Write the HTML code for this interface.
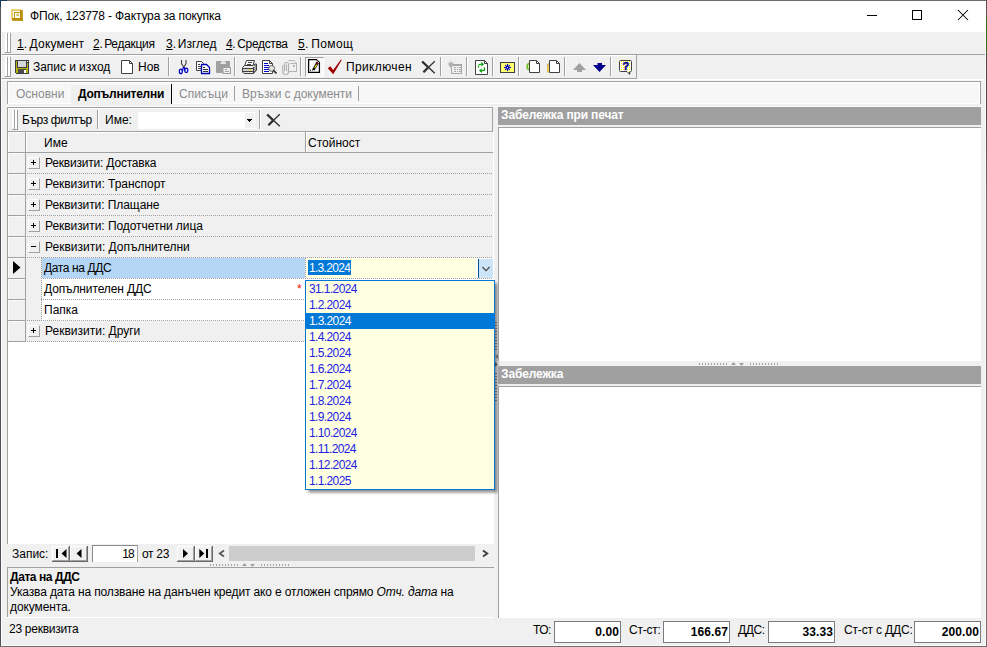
<!DOCTYPE html>
<html>
<head>
<meta charset="utf-8">
<title>ФПок</title>
<style>
html,body{margin:0;padding:0;}
body{width:987px;height:647px;overflow:hidden;background:#f0f0f0;position:relative;
 font-family:"Liberation Sans",sans-serif;font-size:12px;color:#000;}
div,span{position:absolute;box-sizing:border-box;white-space:nowrap;}
.t{height:16px;line-height:16px;}
.b{font-weight:bold;}
.g{color:#8c8c8c;}
.hl{background:#a0a0a0;height:1px;}
.vl{background:#a0a0a0;width:1px;}
.wl{background:#fff;}
.sep{width:2px;height:19px;top:57px;border-left:1px solid #a0a0a0;border-right:1px solid #fff;}
.dot{height:1px;background-image:repeating-linear-gradient(90deg,#a0a0a0 0,#a0a0a0 1px,transparent 1px,transparent 2px);}
.vdot{width:1px;background-image:repeating-linear-gradient(180deg,#a0a0a0 0,#a0a0a0 1px,transparent 1px,transparent 2px);}
.ind{left:8px;width:18px;height:21px;border-right:1px solid #a0a0a0;border-bottom:1px solid #a0a0a0;background:#f0f0f0;box-shadow:inset 1px 1px 0 #fbfbfb;}
.pm{left:28px;width:12px;height:12px;background:#f0f0f0;border-top:1px solid #fff;border-left:1px solid #fff;border-right:1px solid #a0a0a0;border-bottom:1px solid #a0a0a0;}
.pm i{position:absolute;background:#000;}
.li{left:306px;width:188px;height:16px;line-height:16px;padding-left:3px;color:#2222e4;letter-spacing:-0.62px;}
.box{height:22px;top:621px;width:67px;background:#fff;border:1px solid #7a7a7a;}
.num{font-weight:bold;text-align:right;letter-spacing:0.08px;width:65px;}
svg{position:absolute;overflow:visible;}
</style>
</head>
<body>

<!-- ===== title bar ===== -->
<div id="title" style="left:1px;top:1px;width:985px;height:31px;background:#fff;"></div>
<div class="t" style="left:30px;top:8px;letter-spacing:-0.13px;">ФПок, 123778 - Фактура за покупка</div>

<!-- ===== menu bar ===== -->
<div id="menu" style="left:1px;top:32px;width:985px;height:22px;background:#f0f0f0;"></div>
<div class="t" style="left:17px;top:36px;word-spacing:-1.3px;letter-spacing:0.18px;"><u>1</u>. Документ</div>
<div class="t" style="left:93px;top:36px;word-spacing:-1.3px;letter-spacing:-0.3px;"><u>2</u>. Редакция</div>
<div class="t" style="left:166px;top:36px;word-spacing:-1.5px;"><u>3</u>. Изглед</div>
<div class="t" style="left:226px;top:36px;word-spacing:-1px;letter-spacing:-0.35px;"><u>4</u>. Средства</div>
<div class="t" style="left:298px;top:36px;word-spacing:-1.3px;letter-spacing:0.4px;"><u>5</u>. Помощ</div>

<!-- ===== toolbar ===== -->
<div class="hl" style="left:1px;top:54px;width:985px;"></div>
<div class="hl wl" style="left:1px;top:55px;width:636px;"></div>
<div class="hl" style="left:1px;top:78px;width:636px;"></div>
<div class="hl wl" style="left:1px;top:79px;width:985px;"></div>
<div class="hl" style="left:1px;top:80px;width:985px;background:#f7f7f7;"></div>
<div class="hl wl" style="left:7px;top:106px;width:975px;background:#fafafa;"></div>
<div class="vl" style="left:636px;top:55px;height:24px;"></div>
<div class="t" style="left:33px;top:59px;letter-spacing:-0.05px;">Запис и изход</div>
<div class="t" style="left:138px;top:59px;">Нов</div>
<div class="t" style="left:346px;top:59px;letter-spacing:0.36px;">Приключен</div>

<!-- ===== tab strip ===== -->
<div id="tabs" style="left:7px;top:81px;width:974px;height:23px;background:#f7f7f7;border-top:1px solid #a0a0a0;border-left:1px solid #a0a0a0;border-right:1px solid #a0a0a0;box-shadow:inset 1px 1px 0 #fff,inset -1px -1px 0 #fff;"></div>
<div style="left:71px;top:85px;width:100px;height:19px;background:#f0f0f0;"></div>
<div class="t g" style="left:16px;top:86px;">Основни</div>
<div class="t b" style="left:78px;top:86px;letter-spacing:-0.25px;">Допълнителни</div>
<div class="t g" style="left:179px;top:86px;">Списъци</div>
<div class="t g" style="left:242px;top:86px;letter-spacing:-0.06px;">Връзки с документи</div>


<!-- ===== left panel: filter bar ===== -->
<div id="fbar" style="left:7px;top:107px;width:486px;height:25px;border:1px solid #a0a0a0;box-shadow:inset 1px 1px 0 #fbfbfb;"></div>
<div class="t" style="left:22px;top:112px;letter-spacing:-0.38px;">Бърз филтър</div>
<div class="vl" style="left:97px;top:110px;height:19px;"></div>
<div class="vl wl" style="left:98px;top:110px;height:19px;"></div>
<div class="t" style="left:105px;top:112px;">Име:</div>
<div style="left:138px;top:112px;width:117px;height:17px;background:#fff;"></div><div style="left:245px;top:113px;width:9px;height:15px;background:#f0f0f0;"></div>
<div class="vl" style="left:259px;top:110px;height:19px;"></div>
<div class="vl wl" style="left:260px;top:110px;height:19px;"></div>

<!-- ===== grid ===== -->
<div id="gridbg" style="left:7px;top:132px;width:487px;height:412px;background:#fff;border-left:1px solid #a0a0a0;"></div>
<div id="ghead" style="left:8px;top:132px;width:485px;height:21px;background:#f0f0f0;border-bottom:1px solid #a0a0a0;"></div>
<div class="vl" style="left:25px;top:132px;height:20px;"></div>
<div class="vl" style="left:305px;top:132px;height:20px;"></div>
<div class="hl wl" style="left:8px;top:132px;width:17px;"></div><div class="hl wl" style="left:26px;top:132px;width:279px;"></div><div class="hl wl" style="left:306px;top:132px;width:187px;"></div>
<div class="vl wl" style="left:8px;top:132px;height:20px;"></div>
<div class="vl wl" style="left:26px;top:132px;height:20px;"></div>
<div class="vl wl" style="left:306px;top:132px;height:20px;"></div>
<div class="t" style="left:44px;top:135px;">Име</div>
<div class="t" style="left:308px;top:135px;">Стойност</div>

<!-- group rows background -->
<div style="left:26px;top:153px;width:467px;height:105px;background:#f0f0f0;"></div>
<div style="left:26px;top:258px;width:16px;height:63px;background:#f0f0f0;"></div>
<div style="left:26px;top:321px;width:467px;height:21px;background:#f0f0f0;"></div>
<!-- indicator cells -->
<div class="ind" style="top:153px;"></div>
<div class="ind" style="top:174px;"></div>
<div class="ind" style="top:195px;"></div>
<div class="ind" style="top:216px;"></div>
<div class="ind" style="top:237px;"></div>
<div class="ind" style="top:258px;"></div>
<div class="ind" style="top:279px;"></div>
<div class="ind" style="top:300px;"></div>
<div class="ind" style="top:321px;"></div>
<!-- dotted row lines -->
<div class="dot" style="left:27px;top:173px;width:466px;"></div>
<div class="dot" style="left:27px;top:194px;width:466px;"></div>
<div class="dot" style="left:27px;top:215px;width:466px;"></div>
<div class="dot" style="left:27px;top:236px;width:466px;"></div>
<div class="dot" style="left:27px;top:257px;width:466px;"></div>
<div class="dot" style="left:41px;top:278px;width:452px;"></div>
<div class="dot" style="left:41px;top:299px;width:452px;"></div>
<div class="dot" style="left:27px;top:320px;width:466px;"></div>
<div class="dot" style="left:27px;top:341px;width:466px;"></div>
<div class="vdot" style="left:41px;top:258px;height:63px;"></div>
<div class="vdot" style="left:305px;top:258px;height:63px;"></div>
<!-- expand buttons -->
<div class="pm" style="top:157px;"><i style="left:2px;top:4px;width:5px;height:1px;"></i><i style="left:4px;top:2px;width:1px;height:5px;"></i></div>
<div class="pm" style="top:178px;"><i style="left:2px;top:4px;width:5px;height:1px;"></i><i style="left:4px;top:2px;width:1px;height:5px;"></i></div>
<div class="pm" style="top:199px;"><i style="left:2px;top:4px;width:5px;height:1px;"></i><i style="left:4px;top:2px;width:1px;height:5px;"></i></div>
<div class="pm" style="top:220px;"><i style="left:2px;top:4px;width:5px;height:1px;"></i><i style="left:4px;top:2px;width:1px;height:5px;"></i></div>
<div class="pm" style="top:241px;"><i style="left:2px;top:4px;width:5px;height:1px;"></i></div>
<div class="pm" style="top:325px;"><i style="left:2px;top:4px;width:5px;height:1px;"></i><i style="left:4px;top:2px;width:1px;height:5px;"></i></div>
<!-- row texts -->
<div class="t" style="left:45px;top:155px;letter-spacing:-0.2px;">Реквизити: Доставка</div>
<div class="t" style="left:45px;top:176px;letter-spacing:-0.04px;">Реквизити: Транспорт</div>
<div class="t" style="left:45px;top:197px;letter-spacing:-0.07px;">Реквизити: Плащане</div>
<div class="t" style="left:45px;top:218px;letter-spacing:-0.06px;">Реквизити: Подотчетни лица</div>
<div class="t" style="left:45px;top:239px;">Реквизити: Допълнителни</div>
<div style="left:42px;top:258px;width:263px;height:20px;background:#b4d5f3;"></div>
<div class="t" style="left:44px;top:260px;letter-spacing:-0.37px;">Дата на ДДС</div>
<div class="t" style="left:44px;top:281px;letter-spacing:-0.12px;">Допълнителен ДДС</div>
<div class="t" style="left:44px;top:302px;">Папка</div>
<div class="t" style="left:45px;top:323px;">Реквизити: Други</div>
<!-- current row arrow -->
<svg style="left:13px;top:261px;" width="8" height="13"><path d="M0 0L7.5 6.5L0 13Z" fill="#000"/></svg>
<!-- editor cell -->
<div style="left:306px;top:258px;width:187px;height:20px;background:#fff;"></div><div style="left:306px;top:258px;width:170px;height:20px;background:#ffffe1;"></div>
<div style="left:308px;top:260px;width:43px;height:15px;background:#0078d7;"></div>
<div class="t" style="left:309px;top:260px;color:#fff;letter-spacing:-0.7px;">1.3.2024</div>
<div style="left:478px;top:259px;width:15px;height:19px;background:#cce4f7;border-left:1px solid #005499;"></div>
<svg style="left:482px;top:266px;" width="8" height="6"><path d="M0.4 1L4 4.6L7.6 1" fill="none" stroke="#444" stroke-width="1.1"/></svg>
<div class="t" style="left:297px;top:281px;color:#f01000;">*</div>

<!-- vertical splitter marks -->
<div style="left:495px;top:322px;width:2px;height:28px;background-image:repeating-linear-gradient(180deg,#909090 0,#909090 1px,transparent 1px,transparent 3px);"></div>
<div style="left:495px;top:373px;width:2px;height:28px;background-image:repeating-linear-gradient(180deg,#909090 0,#909090 1px,transparent 1px,transparent 3px);"></div>
<svg style="left:495px;top:354px;" width="3" height="5"><path d="M3 0V5L0 2.5Z" fill="#909090"/></svg>
<svg style="left:495px;top:362px;" width="3" height="5"><path d="M0 0V5L3 2.5Z" fill="#808080"/></svg>
<!-- dropdown list -->

<div id="ddl" style="left:305px;top:280px;width:190px;height:210px;background:#ffffe1;border:1px solid #0078d7;box-shadow:2.5px 2.5px 3px rgba(0,0,0,0.46);"></div>
<div class="li" style="top:281px;">31.1.2024</div>
<div class="li" style="top:297px;">1.2.2024</div>
<div class="li" style="top:313px;background:#0078d7;color:#fff;">1.3.2024</div>
<div class="li" style="top:329px;">1.4.2024</div>
<div class="li" style="top:345px;">1.5.2024</div>
<div class="li" style="top:361px;">1.6.2024</div>
<div class="li" style="top:377px;">1.7.2024</div>
<div class="li" style="top:393px;">1.8.2024</div>
<div class="li" style="top:409px;">1.9.2024</div>
<div class="li" style="top:425px;">1.10.2024</div>
<div class="li" style="top:441px;">1.11.2024</div>
<div class="li" style="top:457px;">1.12.2024</div>
<div class="li" style="top:473px;">1.1.2025</div>

<!-- ===== navigator ===== -->
<div id="nav" style="left:8px;top:544px;width:485px;height:20px;background:#f0f0f0;"></div>
<div class="t" style="left:12px;top:546px;">Запис:</div>
<div style="left:92px;top:545px;width:46px;height:17px;background:#fff;border-top:1px solid #8a8a8a;border-left:1px solid #8a8a8a;border-right:1px solid #a0a0a0;"></div>
<div class="t" style="left:100px;top:546px;width:34px;text-align:right;letter-spacing:-0.8px;">18</div>
<div class="t" style="left:142px;top:546px;letter-spacing:-0.3px;">от 23</div>
<div style="left:229px;top:546px;width:246px;height:15px;background:#cdcdcd;"></div>

<!-- ===== description ===== -->
<div class="hl" style="left:7px;top:567px;width:487px;"></div>
<div class="vl" style="left:7px;top:567px;height:50px;"></div>
<div class="hl wl" style="left:7px;top:617px;width:487px;"></div>
<div class="t b" style="left:10px;top:569px;letter-spacing:-0.42px;">Дата на ДДС</div>
<div class="t" style="left:10px;top:584px;letter-spacing:-0.14px;">Указва дата на ползване на данъчен кредит ако е отложен спрямо <i style="position:static">Отч. дата</i> на</div>
<div class="t" style="left:10px;top:599px;letter-spacing:-0.1px;">документа.</div>


<!-- ===== right panel ===== -->
<div style="left:498px;top:107px;width:483px;height:18px;background:#a0a0a0;"></div>
<div class="t b" style="left:501px;top:106px;color:#fff;height:18px;line-height:18px;letter-spacing:-0.14px;">Забележка при печат</div>
<div id="ta1" style="left:498px;top:127px;width:483px;height:234px;background:#fff;border-left:1px solid #a0a0a0;border-top:1px solid #a0a0a0;"></div>
<div style="left:498px;top:366px;width:483px;height:18px;background:#a0a0a0;"></div>
<div class="t b" style="left:501px;top:365px;color:#fff;height:18px;line-height:18px;letter-spacing:-0.14px;">Забележка</div>
<div id="ta2" style="left:498px;top:386px;width:483px;height:232px;background:#fff;border-left:1px solid #a0a0a0;border-top:1px solid #a0a0a0;"></div>

<!-- ===== totals ===== -->
<div class="t" style="left:533px;top:622px;letter-spacing:-0.6px;">ТО:</div>
<div class="box" style="left:554px;"></div>
<div class="t num" style="left:554px;top:624px;">0.00</div>
<div class="t" style="left:629px;top:622px;letter-spacing:-0.25px;">Ст-ст:</div>
<div class="box" style="left:663px;"></div>
<div class="t num" style="left:663px;top:624px;">166.67</div>
<div class="t" style="left:738px;top:622px;letter-spacing:-0.4px;">ДДС:</div>
<div class="box" style="left:768px;"></div>
<div class="t num" style="left:768px;top:624px;">33.33</div>
<div class="t" style="left:844px;top:622px;letter-spacing:-0.16px;">Ст-ст с ДДС:</div>
<div class="box" style="left:914px;"></div>
<div class="t num" style="left:914px;top:624px;">200.00</div>

<!-- ===== window frame ===== -->
<div style="left:0;top:0;width:987px;height:1px;background:#6b6b6b;"></div>
<div style="left:0;top:0;width:1px;height:647px;background:linear-gradient(180deg,#5a5a5a 0,#5a5a5a 98px,#4c5058 98px,#4c5058 100%);"></div>
<div style="left:0;top:0;width:7px;height:1px;background:#1c3a5e;"></div>
<div style="left:0;top:0;width:1px;height:7px;background:#1c3a5e;"></div>
<div style="left:986px;top:0;width:1px;height:647px;background:linear-gradient(180deg,#555 0,#555 17px,#3d6b12 17px,#3d6b12 54px,#444 54px,#4a4a4a 110px,#6e6e6e 200px,#6e6e6e 100%);"></div>
<div style="left:1px;top:32px;width:1px;height:614px;background:#fbfbfb;"></div>
<div style="left:985px;top:32px;width:1px;height:614px;background:#fbfbfb;"></div>
<div style="left:1px;top:645px;width:985px;height:1px;background:#fbfbfb;"></div>
<div style="left:0;top:646px;width:987px;height:1px;background:#6e6e6e;"></div>


<!-- ===== icons ===== -->
<!-- app icon -->
<svg style="left:11px;top:9px;" width="12" height="12" viewBox="0 0 12 12">
 <rect x="0" y="0" width="10.5" height="10.5" rx="1" fill="#ebcf72"/>
 <rect x="9" y="1" width="2.8" height="10.8" fill="#b98d06"/>
 <rect x="1" y="9" width="10.8" height="2.8" fill="#b98d06"/>
 <rect x="2" y="2" width="7" height="7" fill="#fff"/>
 <rect x="3" y="3" width="6" height="6" fill="#c49a18"/>
 <rect x="4" y="4" width="5" height="5" fill="#fff"/>
 <rect x="5.2" y="4.5" width="2.8" height="2.8" rx="1" fill="#dcc066"/>
</svg>
<!-- window buttons -->
<svg style="left:867px;top:10px;" width="10" height="10"><path d="M0 5.5H10" stroke="#000" stroke-width="1" shape-rendering="crispEdges"/></svg>
<svg style="left:912px;top:10px;" width="10" height="10"><rect x="0.5" y="0.5" width="9" height="9" fill="none" stroke="#000" stroke-width="1" shape-rendering="crispEdges"/></svg>
<svg style="left:958px;top:10px;" width="10" height="10"><path d="M0 0L10 10M10 0L0 10" stroke="#000" stroke-width="1.05"/></svg>

<!-- grippers -->
<div style="left:5px;top:33px;width:3px;height:20px;background:#fff;border-right:1px solid #a0a0a0;border-bottom:1px solid #a0a0a0;"></div>
<div style="left:8px;top:33px;width:3px;height:20px;background:#fff;border-right:1px solid #a0a0a0;border-bottom:1px solid #a0a0a0;"></div>
<div style="left:5px;top:57px;width:3px;height:20px;background:#fff;border-right:1px solid #a0a0a0;border-bottom:1px solid #a0a0a0;"></div>
<div style="left:8px;top:57px;width:3px;height:20px;background:#fff;border-right:1px solid #a0a0a0;border-bottom:1px solid #a0a0a0;"></div>
<div style="left:12px;top:110px;width:3px;height:20px;background:#fff;border-right:1px solid #a0a0a0;border-bottom:1px solid #a0a0a0;"></div>
<div style="left:15px;top:110px;width:3px;height:20px;background:#fff;border-right:1px solid #a0a0a0;border-bottom:1px solid #a0a0a0;"></div>

<!-- save -->
<svg style="left:15px;top:60px;" width="14" height="14" shape-rendering="crispEdges">
 <path d="M0 0H14V14H1V13H0Z" fill="#3e3e46"/>
 <rect x="1" y="1" width="12" height="12" fill="#b4b000"/>
 <rect x="2" y="1" width="10" height="7" fill="#3e3e46"/>
 <rect x="3" y="1" width="8" height="6" fill="#d6d6d6"/>
 <rect x="12" y="1" width="1" height="2" fill="#3e3e46"/>
 <rect x="12" y="1" width="1" height="1" fill="#fff"/>
 <rect x="3" y="9" width="8" height="4" fill="#4a4a4a"/>
 <rect x="9" y="10" width="2" height="3" fill="#fff"/>
</svg>
<!-- new -->
<svg style="left:121px;top:60px;" width="12" height="14"><path d="M0.5 0.5H8.5L11.5 3.5V13.5H0.5Z" fill="#fff" stroke="#404040"/><path d="M8.5 0.5V3.5H11.5" fill="none" stroke="#404040"/></svg>
<div class="sep" style="left:168px;"></div>
<!-- cut -->
<svg style="left:178px;top:60px;" width="11" height="14">
 <path d="M3.5 0V3.5L5.6 7M8 0V3.5L5.9 7" fill="none" stroke="#404040" stroke-width="1.1"/>
 <ellipse cx="2.8" cy="11.4" rx="1.5" ry="2.2" fill="none" stroke="#0000c0" stroke-width="1.2"/>
 <ellipse cx="8.3" cy="10.3" rx="1.5" ry="2.2" fill="none" stroke="#0000c0" stroke-width="1.2"/>
 <path d="M5.3 7L4.4 11.5M6.2 7L6.7 10.5" fill="none" stroke="#0000c0" stroke-width="1.2"/>
</svg>
<!-- copy -->
<svg style="left:196px;top:61px;" width="14" height="13">
 <path d="M0.5 0.5H5.5L7.5 2.5V9.5H0.5Z" fill="#fff" stroke="#404040"/>
 <path d="M2 3.5H4M2 5.5H5M2 7.5H5" stroke="#404040" shape-rendering="crispEdges"/>
 <path d="M5.5 3.5H10.5L13.5 6.5V12.5H5.5Z" fill="#fff" stroke="#0000b0" stroke-width="1.3"/>
 <path d="M7 6.5H9M7 8.5H12M7 10.5H12" stroke="#303030" shape-rendering="crispEdges"/>
</svg>
<!-- paste (disabled) -->
<svg style="left:216px;top:60px;" width="15" height="14">
 <rect x="0" y="1" width="14" height="12" rx="1" fill="#a0a0a0"/>
 <path d="M4 4L6 0.5H8.5L10.5 4Z" fill="#e4e4e4"/>
 <rect x="6.5" y="7" width="8.5" height="7" fill="#a0a0a0"/>
 <rect x="7.5" y="8" width="6.5" height="5" fill="#eeeeee"/>
 <path d="M8.5 9.5H10.5M8.5 11.5H13" stroke="#a0a0a0" shape-rendering="crispEdges"/>
</svg>
<div class="sep" style="left:234px;"></div>
<!-- print -->
<svg style="left:242px;top:60px;" width="16" height="14">
 <path d="M4.5 0.5H12.5L10.5 6.5H2.5Z" fill="#fff" stroke="#404040"/>
 <path d="M6 2.5H10M5 4.5H9" stroke="#404040"/>
 <path d="M0.5 7.5L2.5 5.5H11L13 4H14.5V10L11.5 13.5H2L0.5 12Z" fill="#e8e8e8" stroke="#404040"/>
 <path d="M0.5 8.5H11.5M1 11.5H11.5M11.5 7V13.5" stroke="#404040" fill="none"/>
 <rect x="1" y="9" width="10" height="2" fill="#d0d0d0"/>
 <rect x="7" y="9.5" width="2.2" height="1.2" fill="#e8e000"/>
 <path d="M12 6L14 5M12 8L14.3 6.5M12 10L14.3 8.3M12 12L14.3 10" stroke="#404040" stroke-width="0.8"/>
</svg>
<!-- preview -->
<svg style="left:262px;top:60px;" width="15" height="14">
 <path d="M0.5 0.5H7.5L10.5 3.5V13.5H0.5Z" fill="#fff" stroke="#404040"/>
 <path d="M7.5 0.5V3.5H10.5" fill="none" stroke="#404040"/>
 <path d="M2 3.5H6M2 5.5H7M2 7.5H7M2 9.5H7M2 11.5H7" stroke="#0000c0" stroke-width="1.1" shape-rendering="crispEdges"/>
 <circle cx="9.6" cy="8.4" r="2.9" fill="#e4e4e4" stroke="#505050" stroke-width="0.9"/>
 <path d="M11.8 10.8L14 12.8" stroke="#303030" stroke-width="1.8" stroke-linecap="round"/>
</svg>
<!-- attach (disabled) -->
<svg style="left:282px;top:60px;" width="16" height="15">
 <path d="M6.5 0.5H12L14.5 3V11.5H7" fill="#f0f0f0" stroke="#b4b4b4"/>
 <path d="M8 3.5H14.5" stroke="#b4b4b4"/>
 <rect x="11" y="5" width="1.8" height="1.8" fill="#a8a8a8"/>
 <path d="M4.5 11V4.5M2.5 11.5V4Q2.5 2.5 4.5 2.5Q6.5 2.5 6.5 4V12Q6.5 14.5 3.7 14.5Q0.7 14.5 0.7 12V5" fill="none" stroke="#b0b0b0" stroke-width="1.1"/>
</svg>
<div class="sep" style="left:300px;"></div>
<!-- edit (pressed) -->
<div style="left:305px;top:57px;width:19px;height:20px;background:#f8f8f8;border-top:1px solid #a0a0a0;border-left:1px solid #a0a0a0;border-right:1px solid #fff;border-bottom:1px solid #fff;"></div>
<svg style="left:308px;top:59px;" width="12" height="14">
 <path d="M0.6 0.6H8.5L11.4 3.5V13.4H0.6Z" fill="#fff" stroke="#000" stroke-width="1.25"/>
 <path d="M9.9 3L5.4 10.8" stroke="#101010" stroke-width="2.7"/>
 <path d="M8.6 5.6L6.6 9" stroke="#f0f000" stroke-width="1.1"/>
 <path d="M9.5 3.9L8.9 5" stroke="#c00000" stroke-width="1.5"/>
 <path d="M5.8 10.4L4 11.3" stroke="#000" stroke-width="1"/>
 <rect x="2" y="10.8" width="1" height="1" fill="#000"/>
 <rect x="8.7" y="1.6" width="1" height="1" fill="#fff"/><rect x="9.9" y="3" width="1" height="1" fill="#fff"/>
</svg>
<!-- check -->
<svg style="left:327px;top:59px;" width="15" height="16"><path d="M0.8 9.3L3.3 7.2L6.2 10.9L13.9 0.5L14.7 1.1L9.6 9.8L6.2 15.2Z" fill="#a00000"/></svg>
<!-- X -->
<svg style="left:421px;top:60px;" width="15" height="15">
 <path d="M1.2 1.6L13.8 13.2" stroke="#303030" stroke-width="1.4" fill="none"/>
 <path d="M1.2 1.6L7 7" stroke="#303030" stroke-width="2.2" fill="none"/>
 <path d="M13.8 1.2L2.6 12" stroke="#303030" stroke-width="1.2" fill="none"/>
 <path d="M7 7.6L2.4 12.2" stroke="#303030" stroke-width="2.2" fill="none"/>
</svg>
<div class="sep" style="left:440px;"></div>
<!-- gray table -->
<svg style="left:447px;top:60px;" width="16" height="14">
 <rect x="4.5" y="4.5" width="10" height="9" fill="#f0f0f0" stroke="#a8a8a8"/>
 <rect x="4" y="4" width="11" height="2" fill="#a8a8a8"/>
 <path d="M6.5 7.5H8.5M10 7.5H11M12 7.5H13.5M6.5 9.5H8.5M10 9.5H11M12 9.5H13.5M6.5 11.5H8.5M10 11.5H11M12 11.5H13.5" stroke="#a8a8a8" shape-rendering="crispEdges"/>
 <path d="M1 3L2.6 3.6L3 0.5L4.6 3L6.4 2L6 5L4 8L2 6Z" fill="#b0b0b0"/>
</svg>
<div class="sep" style="left:466px;"></div>
<!-- refresh -->
<svg style="left:475px;top:60px;" width="13" height="15">
 <path d="M0.5 0.5H9.5L12.5 3.5V14.5H0.5Z" fill="#fff" stroke="#404040"/>
 <path d="M9.5 0.5V3.5H12.5" fill="none" stroke="#404040"/>
 <path d="M3.5 7.5V5.5Q3.5 4.3 5 4.3H7" fill="none" stroke="#00a000" stroke-width="1.3" stroke-dasharray="2 0.8"/>
 <path d="M6.2 2L9 4.3L6.2 6.6Z" fill="#00a000"/>
 <path d="M9.5 7.5V9.5Q9.5 10.7 8 10.7H6.5" fill="none" stroke="#00a000" stroke-width="1.3"/>
 <path d="M6.8 8.4L4 10.7L6.8 13Z" fill="#00a000"/>
</svg>
<div class="sep" style="left:492px;"></div>
<!-- star -->
<svg style="left:500px;top:62px;" width="15" height="11">
 <rect x="0.5" y="0.5" width="14" height="10" fill="#ffff70" stroke="#404040"/>
 <path d="M7.5 2V9M4 5.5H11M5.2 3.2L9.8 7.8M9.8 3.2L5.2 7.8" stroke="#0000c0" stroke-width="1.1"/>
 <circle cx="7.5" cy="5.5" r="1.6" fill="#0000c0"/><circle cx="7.5" cy="5.5" r="0.6" fill="#fff"/>
</svg>
<div class="sep" style="left:518px;"></div>
<!-- doc green -->
<svg style="left:526px;top:60px;" width="14" height="13">
 <ellipse cx="2.6" cy="6.5" rx="2.2" ry="3.6" fill="#70c020"/><ellipse cx="2.8" cy="6.5" rx="0.9" ry="2" fill="#d8f0b0"/>
 <path d="M3.5 0.5H10.5L13.5 3.5V12.5H3.5Z" fill="#fff" stroke="#404040"/>
 <path d="M10.5 0.5V3.5H13.5" fill="none" stroke="#404040"/>
</svg>
<!-- doc orange -->
<svg style="left:546px;top:60px;" width="14" height="13">
 <path d="M1 5Q1.5 3 3.5 3V12.5H1Z" fill="#e8b060"/><rect x="1.8" y="6" width="1.8" height="5.5" fill="#f4e050"/>
 <path d="M3.5 0.5H10.5L13.5 3.5V12.5H3.5Z" fill="#fff" stroke="#404040"/>
 <path d="M10.5 0.5V3.5H13.5" fill="none" stroke="#404040"/>
</svg>
<div class="sep" style="left:564px;"></div>
<!-- up / down arrows -->
<svg style="left:573px;top:63px;" width="13" height="9"><path d="M6.5 0L13 7H9V9H4V7H0Z" fill="#a0a0a0"/></svg>
<svg style="left:593px;top:63px;" width="13" height="9"><path d="M4.5 0H9V2H13L6.5 9L0 2H4.5Z" fill="#00008c"/></svg>
<div class="sep" style="left:610px;"></div>
<!-- help -->
<svg style="left:619px;top:60px;" width="13" height="15">
 <defs><pattern id="yd" x="0" y="0" width="2" height="2" patternUnits="userSpaceOnUse"><rect x="0" y="1" width="1" height="1" fill="#ffff00"/></pattern></defs>
 <path d="M1.5 0.5H11.5Q12.5 0.5 12.5 1.5V10.5Q12.5 11.5 11.5 11.5H11L10.6 14.3L8 11.5H1.5Q0.5 11.5 0.5 10.5V1.5Q0.5 0.5 1.5 0.5Z" fill="#fff" stroke="#404040"/>
 <path d="M1.5 1H11.5V11H11L10.5 13.5L8.3 11H1.5Z" fill="url(#yd)"/>
 <path d="M10.9 11.6L10.6 14.4L9.4 13Z" fill="#303030"/>
 <text x="6.8" y="10.2" font-family="Liberation Sans, sans-serif" font-weight="bold" font-size="11" fill="#000090" stroke="#000090" stroke-width="0.5" text-anchor="middle">?</text>
</svg>

<!-- filter combobox arrow + clear X -->
<svg style="left:247px;top:119px;" width="5" height="3" shape-rendering="crispEdges"><path d="M0 0H5V1H4V2H3V3H2V2H1V1H0Z" fill="#000"/></svg>
<svg style="left:266px;top:113px;" width="15" height="15">
 <path d="M1.2 1.6L13.8 13.2" stroke="#303030" stroke-width="1.4" fill="none"/>
 <path d="M1.2 1.6L7 7" stroke="#303030" stroke-width="2.2" fill="none"/>
 <path d="M13.8 1.2L2.6 12" stroke="#303030" stroke-width="1.2" fill="none"/>
 <path d="M7 7.6L2.4 12.2" stroke="#303030" stroke-width="2.2" fill="none"/>
</svg>

<div style="left:171px;top:84px;width:1px;height:20px;background:#000;"></div>
<div class="vl" style="left:234px;top:86px;height:15px;"></div>
<div class="vl" style="left:358px;top:86px;height:15px;"></div>

<!-- nav buttons -->
<div style="left:52px;top:546px;width:18px;height:16px;border-right:1px solid #696969;border-bottom:1px solid #696969;background:#f0f0f0;"><div style="left:0;top:0;width:17px;height:15px;border-right:1px solid #a0a0a0;border-bottom:1px solid #a0a0a0;border-top:1px solid #fff;border-left:1px solid #fff;"></div><svg style="left:0;top:0;" width="18" height="16"><rect x="4" y="3" width="2" height="9" fill="#000"/><path d="M9.5 7.5L14.5 3V12Z" fill="#000"/></svg></div>
<div style="left:70px;top:546px;width:18px;height:16px;border-right:1px solid #696969;border-bottom:1px solid #696969;background:#f0f0f0;"><div style="left:0;top:0;width:17px;height:15px;border-right:1px solid #a0a0a0;border-bottom:1px solid #a0a0a0;border-top:1px solid #fff;border-left:1px solid #fff;"></div><svg style="left:0;top:0;" width="18" height="16"><path d="M6.5 7.5L11.5 3V12Z" fill="#000"/></svg></div>
<div style="left:177px;top:546px;width:18px;height:16px;border-right:1px solid #696969;border-bottom:1px solid #696969;background:#f0f0f0;"><div style="left:0;top:0;width:17px;height:15px;border-right:1px solid #a0a0a0;border-bottom:1px solid #a0a0a0;border-top:1px solid #fff;border-left:1px solid #fff;"></div><svg style="left:0;top:0;" width="18" height="16"><path d="M11 7.5L6 3V12Z" fill="#000"/></svg></div>
<div style="left:195px;top:546px;width:18px;height:16px;border-right:1px solid #696969;border-bottom:1px solid #696969;background:#f0f0f0;"><div style="left:0;top:0;width:17px;height:15px;border-right:1px solid #a0a0a0;border-bottom:1px solid #a0a0a0;border-top:1px solid #fff;border-left:1px solid #fff;"></div><svg style="left:0;top:0;" width="18" height="16"><path d="M9.3 7.5L4.3 3V12Z" fill="#000"/><rect x="11" y="3" width="2" height="9" fill="#000"/></svg></div>
<svg style="left:218px;top:550px;" width="7" height="7"><path d="M6 0.5L1.8 3.5L6 6.5" fill="none" stroke="#5a5a5a" stroke-width="1.9"/></svg>
<svg style="left:482px;top:550px;" width="7" height="7"><path d="M1 0.5L5.2 3.5L1 6.5" fill="none" stroke="#404040" stroke-width="1.9"/></svg>
<!-- left horizontal splitter -->
<div style="left:210px;top:564px;width:28px;height:2px;background-image:repeating-linear-gradient(90deg,#a4a4a4 0,#a4a4a4 1px,transparent 1px,transparent 3px);"></div>
<div style="left:261px;top:564px;width:28px;height:2px;background-image:repeating-linear-gradient(90deg,#a4a4a4 0,#a4a4a4 1px,transparent 1px,transparent 3px);"></div>
<svg style="left:242px;top:563px;" width="5" height="3"><path d="M2.5 0L5 3H0Z" fill="#a0a0a0"/></svg>
<svg style="left:250px;top:564px;" width="5" height="3"><path d="M0 0H5L2.5 3Z" fill="#a0a0a0"/></svg>

<!-- right horizontal splitter -->
<div style="left:699px;top:363px;width:28px;height:2px;background-image:repeating-linear-gradient(90deg,#a4a4a4 0,#a4a4a4 1px,transparent 1px,transparent 3px);"></div>
<div style="left:750px;top:363px;width:28px;height:2px;background-image:repeating-linear-gradient(90deg,#a4a4a4 0,#a4a4a4 1px,transparent 1px,transparent 3px);"></div>
<svg style="left:731px;top:362px;" width="5" height="3"><path d="M2.5 0L5 3H0Z" fill="#a0a0a0"/></svg>
<svg style="left:739px;top:363px;" width="5" height="3"><path d="M0 0H5L2.5 3Z" fill="#a0a0a0"/></svg>

<!-- ===== status bar ===== -->
<div class="t" style="left:9px;top:621px;letter-spacing:-0.27px;">23 реквизита</div>

</body>
</html>
